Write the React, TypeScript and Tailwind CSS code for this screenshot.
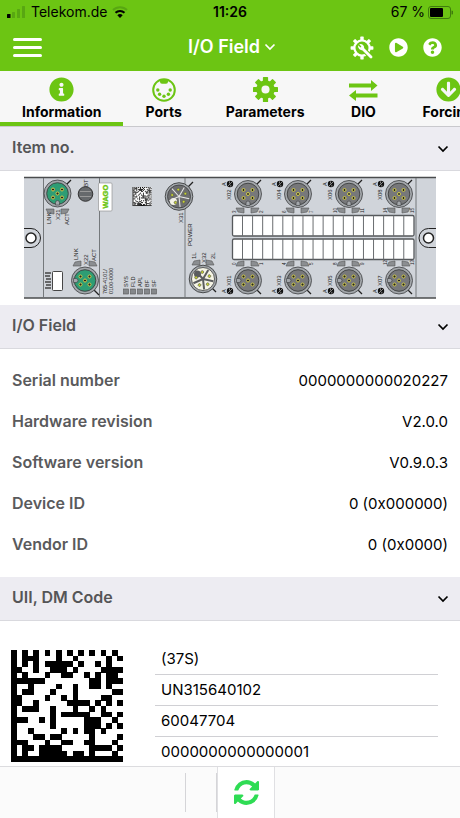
import React from "react";
import { FaArrowCircleDown, FaInfoCircle, FaPlayCircle, FaQuestionCircle } from "react-icons/fa";

const GREEN = "#6cc513";

function Teeth({ count, r, w, h }: { count: number; r: number; w: number; h: number }) {
  return (
    <>
      {Array.from({ length: count }, (_, i) => (
        <rect
          key={i}
          x={12 - w / 2}
          y={12 - r}
          width={w}
          height={h}
          rx="0.6"
          fill="currentColor"
          transform={`rotate(${(360 / count) * i} 12 12)`}
        />
      ))}
    </>
  );
}

function GearIcon() {
  return (
    <svg viewBox="0 0 24 24" className="size-[25px]" aria-hidden="true">
      <Teeth count={8} r={12} w={5} h={6} />
      <circle cx="12" cy="12" r="6.4" fill="none" stroke="currentColor" strokeWidth="5" />
    </svg>
  );
}

function ServiceIcon() {
  return (
    <svg viewBox="0 0 24 24" className="size-6" aria-hidden="true">
      <Teeth count={8} r={11.4} w={3.4} h={4} />
      <circle cx="12" cy="12" r="7.6" fill="none" stroke="currentColor" strokeWidth="2.2" />
      <path d="M14.5 14.5 22 22" stroke={GREEN} strokeWidth="5" />
      <path d="M12.5 12.5 21 21" stroke="currentColor" strokeWidth="2.8" strokeLinecap="round" />
      <path
        d="M9.2 8.200 11.400 10.400 10.400 11.400 8.200 9.200A3.800 3.800 0 0 0 13 14L14 13A3.800 3.800 0 0 0 9.200 8.200Z"
        fill="currentColor"
      />
    </svg>
  );
}

function RefreshIcon() {
  return (
    <svg viewBox="0 0 1536 1536" className="size-[25px]" fill="currentColor" aria-hidden="true">
      <path d="M1511 928q0 5-1 7-64 268-268 434.500T764 1536q-146 0-282.500-55T238 1324l-129 129q-19 19-45 19t-45-19-19-45V960q0-26 19-45t45-19h448q26 0 45 19t19 45-19 45l-137 137q71 66 161 102t187 36q134 0 250-65t186-179q11-17 53-117 8-23 30-23h192q13 0 22.500 9.500t9.500 22.500zm25-800v448q0 26-19 45t-45 19h-448q-26 0-45-19t-19-45 19-45l138-138Q969 256 768 256q-134 0-250 65T332 500q-11 17-53 117-8 23-30 23H50q-13 0-22.500-9.500T18 608v-7q65-268 270-434.500T768 0q146 0 284 55.500T1297 212l130-129q19-19 45-19t45 19 19 45z" />
    </svg>
  );
}

function PortsIcon() {
  return (
    <svg viewBox="0 0 24 24" className="size-6" aria-hidden="true">
      <circle cx="12" cy="12" r="10.800" fill="none" stroke="currentColor" strokeWidth="2" />
      <path d="M8 1.500h8v2.200a2 2 0 0 1-2 2h-4a2 2 0 0 1-2-2z" fill="currentColor" />
      {[
        [5.8, 12],
        [7.6, 16.2],
        [12, 18.2],
        [16.4, 16.2],
        [18.2, 12],
      ].map(([x, y]) => (
        <circle key={x} cx={x} cy={y} r="1.700" fill="currentColor" />
      ))}
    </svg>
  );
}

function DioIcon() {
  return (
    <svg viewBox="0 0 30 24" className="h-6 w-[30px]" fill="currentColor" aria-hidden="true">
      <path d="M1 5.500h22V2l6.500 5.500L23 13V9.500H1z" />
      <path d="M29.500 15.500H8V12L1 17.500 8 23v-3.500h21.500z" />
    </svg>
  );
}

function Chevron({ className }: { className: string }) {
  return (
    <svg
      viewBox="0 0 12 8"
      className={className}
      fill="none"
      stroke="currentColor"
      strokeWidth="1.700"
      aria-hidden="true"
    >
      <path d="M1.500 1.500 6 6l4.500-4.500" />
    </svg>
  );
}

function StatusBar() {
  return (
    <div className="relative flex h-6 items-center justify-between px-[7px] text-sm text-black">
      <div className="flex items-center gap-[5px]">
        <svg viewBox="0 0 19 12" className="h-3 w-[19px]" aria-hidden="true">
          <rect x="0" y="8" width="3.500" height="4" rx="0.500" fill="#000" />
          <rect x="5" y="6" width="3" height="6" rx="0.500" fill="#58a712" />
          <rect x="10" y="3" width="3" height="9" rx="0.500" fill="#58a712" />
          <rect x="15" y="0" width="3" height="12" rx="0.500" fill="#58a712" />
        </svg>
        <span>Telekom.de</span>
        <svg viewBox="0 0 16 12" className="h-3 w-4" fill="none" aria-hidden="true">
          <path d="M1 4a10 10 0 0 1 14 0" stroke="#58a712" strokeWidth="2" />
          <path d="M3.500 6.800a6.500 6.500 0 0 1 9 0" stroke="#000" strokeWidth="2" />
          <path d="M8 12 5.300 9.200a4 4 0 0 1 5.400 0z" fill="#000" />
        </svg>
      </div>
      <span className="absolute left-1/2 -translate-x-1/2 font-semibold">11:26</span>
      <div className="flex items-center gap-[3px]">
        <span>67 %</span>
        <svg viewBox="0 0 25 13" className="h-[13px] w-[25px]" aria-hidden="true">
          <rect x="0.500" y="0.500" width="22" height="12" rx="2.500" fill="none" stroke="#3f7c0d" />
          <rect x="2" y="2" width="13" height="9" rx="1" fill="#000" />
          <path d="M23.500 4.500v4a2 2 0 0 0 0-4z" fill="#3f7c0d" />
        </svg>
      </div>
    </div>
  );
}

function NavBar() {
  return (
    <header className="relative flex h-[47px] items-center justify-between pr-[18px] pl-[13px] text-white">
      <button type="button" aria-label="Menu" className="flex w-[29px] flex-col gap-[5px]">
        <span className="h-[3px] w-full rounded-sm bg-white" />
        <span className="h-[3px] w-full rounded-sm bg-white" />
        <span className="h-[3px] w-full rounded-sm bg-white" />
      </button>
      <button
        type="button"
        className="absolute left-1/2 flex -translate-x-1/2 items-center gap-1 pb-[2px] pl-1 text-lg font-semibold whitespace-nowrap"
      >
        I/O Field
        <Chevron className="h-2 w-3" />
      </button>
      <div className="flex items-center gap-[15px]">
        <button type="button" aria-label="Service">
          <ServiceIcon />
        </button>
        <button type="button" aria-label="Start">
          <FaPlayCircle className="size-[19px]" />
        </button>
        <button type="button" aria-label="Help">
          <FaQuestionCircle className="size-[19px]" />
        </button>
      </div>
    </header>
  );
}

const TABS = [
  { label: "Information", icon: <FaInfoCircle className="size-[25px]" />, active: true },
  { label: "Ports", icon: <PortsIcon />, active: false },
  { label: "Parameters", icon: <GearIcon />, active: false },
  { label: "DIO", icon: <DioIcon />, active: false },
  { label: "Forcing", icon: <FaArrowCircleDown className="size-[25px]" />, active: false },
];

function Tabs() {
  return (
    <nav className="flex h-14 shrink-0 overflow-x-auto overflow-y-hidden border-b border-[#c9c9cd] bg-[#f7f7f7] [scrollbar-width:none]">
      {TABS.map((t) => (
        <button
          key={t.label}
          type="button"
          className={`flex shrink-0 flex-col items-center border-b-4 px-[22px] pt-[6px] text-sm font-bold text-black ${
            t.active ? "border-[#6cc513]" : "border-transparent"
          }`}
        >
          <span className="flex h-7 items-center text-[#6cc513]">{t.icon}</span>
          <span className="leading-5">{t.label}</span>
        </button>
      ))}
    </nav>
  );
}

function SectionHeader({ title }: { title: string }) {
  return (
    <button
      type="button"
      className="flex h-11 w-full items-center justify-between border-b border-[#d9d9de] bg-[#edecf2] pr-[11px] pl-3 text-left text-base font-semibold text-[#555557]"
    >
      <span className="pb-[3px]">{title}</span>
      <Chevron className="h-2 w-3 text-black" />
    </button>
  );
}

function Label({ x, y, size = 6, children }: { x: number; y: number; size?: number; children: string }) {
  return (
    <text
      x={x}
      y={y}
      fontSize={size}
      fill="#222"
      transform={`rotate(-90 ${x} ${y})`}
      fontFamily="'Liberation Sans', Arial, sans-serif"
    >
      {children}
    </text>
  );
}

const PINS = [
  [-4.5, -4],
  [4.5, -4],
  [0, 0],
  [-4.5, 4],
  [4.5, 4],
];

function Connector({ x, y, fill, notch }: { x: number; y: number; fill: string; notch: "left" | "down" }) {
  return (
    <g transform={`translate(${x} ${y})`}>
      <circle r="13.500" fill="#a3a7ab" stroke="#3c3e40" strokeWidth="0.800" />
      <circle r="10.800" fill={fill} stroke="#3c3e40" strokeWidth="0.900" />
      {notch === "down" ? (
        <path d="M-2 11.500V9a2 2 0 0 1 4 0v2.500z" fill="#a3a7ab" stroke="#3c3e40" strokeWidth="0.600" />
      ) : (
        <path d="M-11.500-2H-9a2 2 0 0 1 0 4h-2.500z" fill="#a3a7ab" stroke="#3c3e40" strokeWidth="0.600" />
      )}
      {PINS.map(([px, py]) => (
        <circle key={`${px},${py}`} cx={px} cy={py} r="1.500" fill="#222" stroke="#d3cd4a" strokeWidth="1" />
      ))}
    </g>
  );
}

function PowerConnector({ x, y, light }: { x: number; y: number; light: boolean }) {
  const base = light ? "#f6f5e6" : "#6d6e70";
  const line = light ? "#5b5d5f" : "#e9e9e9";
  return (
    <g transform={`translate(${x} ${y})`}>
      <circle r="13.800" fill="#a3a7ab" stroke="#3c3e40" strokeWidth="0.900" />
      <circle r="11.500" fill={base} stroke="#3c3e40" strokeWidth="0.800" />
      <circle cx="-5.500" cy={light ? -5 : 5} r="3.500" fill={light ? "#5b5d5f" : "#f6f5e6"} />
      {[30, 102, 174, 246, 318].map((a) => (
        <path key={a} d="M0 0V-10.500" stroke={line} strokeWidth={light ? 2 : 1} transform={`rotate(${a})`} />
      ))}
      {[-6, 66, 138, 210, 282].map((a) => (
        <circle key={a} cy="-7" r="1.400" fill="#c9d62e" stroke="#555" strokeWidth="0.600" transform={`rotate(${a})`} />
      ))}
    </g>
  );
}

function Led({ x, y, flip, up }: { x: number; y: number; flip?: boolean; up?: boolean }) {
  return (
    <path
      d="M0 0 8 0V5L2 4z"
      fill="#8b8e91"
      stroke="#555"
      strokeWidth="0.600"
      transform={`translate(${x} ${y}) scale(${flip ? -1 : 1} ${up ? -1 : 1})`}
    />
  );
}

function PolarityMark({ x, y }: { x: number; y: number }) {
  return (
    <g transform={`translate(${x} ${y})`}>
      <circle r="3.200" fill="#111" />
      <path d="M-2.200 2.200 2.200-2.200M-0.500-2.600v2M0.800 0.800v1.800" stroke="#fff" strokeWidth="0.500" />
    </g>
  );
}

const MATRIX = [
  "10101010101010101010",
  "10111000100100000101",
  "10101011111010010100",
  "11001001110100001111",
  "10100010011001010110",
  "11111100000000110111",
  "10010000100100110100",
  "10110001000100000011",
  "11000010010100001100",
  "11001000001111010101",
  "10111001000100101000",
  "10000001011111001101",
  "11100101000001110010",
  "10000001000001110101",
  "10010000010101101000",
  "10001101100000100001",
  "11100010011001100010",
  "10110111100000111101",
  "10100111110110100010",
  "11111111111111111111",
];

function MatrixCells() {
  return (
    <>
      {MATRIX.flatMap((row, r) =>
        [...row].map((v, c) =>
          v === "1" ? <rect key={`${r}-${c}`} x={c} y={r} width="1.020" height="1.020" fill="#000" /> : null,
        ),
      )}
    </>
  );
}

const PORT_COLUMNS = [
  { x: 248, top: "X02", bottom: "X01", topLeds: ["3", "2"], bottomLeds: ["0", "1"] },
  { x: 298, top: "X04", bottom: "X03", topLeds: ["6", "7"], bottomLeds: ["4", "5"] },
  { x: 349, top: "X06", bottom: "X05", topLeds: ["10", "11"], bottomLeds: ["8", "9"] },
  { x: 399, top: "X08", bottom: "X07", topLeds: ["14", "15"], bottomLeds: ["12", "13"] },
];

function DeviceDrawing() {
  return (
    <svg viewBox="24 176 412 123" className="w-full" role="img" aria-label="I/O module front view">
      <rect x="24" y="177" width="412" height="121" fill="#d0d4da" />
      <path d="M24 177.500H436M24 298H436" stroke="#4a4c4e" strokeWidth="1.300" />
      <path d="M43.500 178V297M99.500 178V297M185 178V297M416 178V297" stroke="#6a6d70" strokeWidth="0.900" />

      <path d="M24 228.500H31a9.500 9.500 0 0 1 0 19H24" fill="#d0d4da" stroke="#222" />
      <circle cx="31" cy="238" r="5" fill="#fff" stroke="#222" strokeWidth="1.500" />
      <path d="M436 228.500H428.500a9.500 9.500 0 0 0 0 19H436" fill="#d0d4da" stroke="#222" />
      <circle cx="428.500" cy="238" r="5" fill="#fff" stroke="#222" strokeWidth="1.500" />

      <path d="M66 185 71 180M94 290 99 295M188 187 193 182M211 287 216 292" stroke="#222" strokeWidth="1.300" />
      <Connector x={57.5} y={193.5} fill="#2e9d74" notch="down" />
      <Led x={46} y={209} />
      <Led x={69} y={209} flip />
      <Label x={50.5} y={224}>LNK</Label>
      <Label x={60} y={220}>X21</Label>
      <Label x={69} y={225}>ACT</Label>

      <Label x={87.5} y={187}>BT</Label>
      <circle cx="85.500" cy="194" r="7.300" fill="#66696c" stroke="#333" />
      <path d="M80 191.500h11M80 196.500h11" stroke="#999" />

      <rect x="98.500" y="183" width="13.500" height="28" rx="1" fill="#fff" stroke="#888" strokeWidth="0.600" />
      <text
        x="108"
        y="208.500"
        fontSize="7.500"
        fontWeight="900"
        fill="#6cc513"
        stroke="#6cc513"
        strokeWidth="0.400"
        transform="rotate(-90 108 208.500)"
        fontFamily="'Liberation Sans', Arial, sans-serif"
      >
        WAGO
      </text>

      <Connector x={85} y={280.5} fill="#2e9d74" notch="left" />
      <Led x={73} y={266} up />
      <Led x={97} y={266} flip up />
      <Label x={78} y={260}>LNK</Label>
      <Label x={87.5} y={265}>X22</Label>
      <Label x={96} y={261}>ACT</Label>
      <rect x="52.500" y="271.500" width="10" height="19" rx="1" fill="#fff" stroke="#333" strokeWidth="0.900" />
      <path d="M45 273h6M45 276h5M46 279h5M45 282h6M46 285h5M45 288h6" stroke="#444" strokeWidth="1.500" />
      <Label x={107} y={294} size={5.5}>765-4101/</Label>
      <Label x={113} y={294} size={5.5}>0100-0000</Label>

      <g transform="translate(132.500 187) scale(0.950)">
        <rect width="20" height="20" fill="#fff" />
        <MatrixCells />
      </g>

      {["SYS", "FLD", "APL", "BF", "SF"].map((name, i) => (
        <g key={name}>
          <rect x={123.5 + i * 7} y="289" width="5" height="5" fill="#85888b" stroke="#555" strokeWidth="0.600" />
          <Label x={128 + i * 7} y={287} size={5.5}>
            {name}
          </Label>
        </g>
      ))}

      <PowerConnector x={179} y={196.5} light={false} />
      <Label x={183} y={223}>X31</Label>
      <Label x={192} y={246}>POWER</Label>
      <Led x={192} y={265} up />
      <Led x={214} y={265} flip up />
      <Label x={196} y={259}>1L</Label>
      <Label x={205.5} y={263}>X32</Label>
      <Label x={215} y={259}>2L</Label>
      <PowerConnector x={203} y={279} light />

      {[215.5, 239].map((y) => (
        <g key={y}>
          <rect x="232.500" y={y} width="181.500" height="20.500" rx="1.500" fill="#fff" stroke="#55585b" strokeWidth="1.300" />
          {Array.from({ length: 17 }, (_, i) => (
            <path key={i} d={`M${242.5 + i * 10.08} ${y}v20.500`} stroke="#6a6d70" />
          ))}
        </g>
      ))}

      {PORT_COLUMNS.map((p) => (
        <g key={p.x}>
          <path d={`M${p.x + 8} 185l5-5M${p.x + 8} 289l5 5`} stroke="#222" strokeWidth="1.300" />
          <Connector x={p.x} y={194} fill="#77787a" notch="down" />
          <Connector x={p.x} y={280.5} fill="#77787a" notch="left" />
          <PolarityMark x={p.x - 18} y={184} />
          <PolarityMark x={p.x - 18} y={291} />
          <Label x={p.x - 22.5} y={186} size={5.5}>A</Label>
          <Label x={p.x - 22.5} y={293} size={5.5}>A</Label>
          <Label x={p.x - 17} y={200}>{p.top}</Label>
          <Label x={p.x - 17} y={286}>{p.bottom}</Label>
          <Led x={p.x - 12} y={208} />
          <Led x={p.x + 11} y={208} flip />
          <Led x={p.x - 12} y={266} up />
          <Led x={p.x + 11} y={266} flip up />
          <Label x={p.x - 12} y={213} size={4.5}>{p.topLeds[0]}</Label>
          <Label x={p.x + 15} y={213} size={4.5}>{p.topLeds[1]}</Label>
          <Label x={p.x - 12} y={265} size={4.5}>{p.bottomLeds[0]}</Label>
          <Label x={p.x + 15} y={265} size={4.5}>{p.bottomLeds[1]}</Label>
        </g>
      ))}
    </svg>
  );
}

const FIELDS = [
  ["Serial number", "0000000000020227"],
  ["Hardware revision", "V2.0.0"],
  ["Software version", "V0.9.0.3"],
  ["Device ID", "0 (0x000000)"],
  ["Vendor ID", "0 (0x0000)"],
];

const UII = ["(37S)", "UN315640102", "60047704", "0000000000000001"];

export default function App() {
  return (
    <div className="flex h-screen flex-col overflow-hidden bg-white font-['Inter','Liberation_Sans',sans-serif] text-black">
      <div className="shrink-0 bg-[#6cc513]">
        <StatusBar />
        <NavBar />
      </div>
      <Tabs />
      <main className="min-h-0 flex-1 overflow-y-auto [scrollbar-width:none]">
        <SectionHeader title="Item no." />
        <div className="px-6 pt-[5px] pb-[6px]">
          <DeviceDrawing />
        </div>
        <SectionHeader title="I/O Field" />
        <dl className="px-3 pt-[11px] pb-3">
          {FIELDS.map(([name, value]) => (
            <div key={name} className="flex h-[41px] items-baseline justify-between leading-[41px]">
              <dt className="font-semibold text-[#5a5a5c]">{name}</dt>
              <dd className="text-[15px] leading-[41px]">{value}</dd>
            </div>
          ))}
        </dl>
        <SectionHeader title="UII, DM Code" />
        <div className="flex gap-8 pt-[23px] pr-[22px] pb-6 pl-[11px]">
          <svg
            viewBox="0 0 20 20"
            className="mt-[6px] size-28 shrink-0"
            shapeRendering="crispEdges"
            role="img"
            aria-label="Data matrix code"
          >
            <MatrixCells />
          </svg>
          <ul className="flex-1 divide-y divide-[#d0d0d4] text-[15px]">
            {UII.map((line) => (
              <li key={line} className="flex h-[31px] items-center px-[6px]">
                {line}
              </li>
            ))}
          </ul>
        </div>
      </main>
      <footer className="flex h-[52px] shrink-0 items-stretch border-t border-[#dcdcdf] bg-[#fbfbfb] pl-[185px]">
        <div className="my-[6px] w-8 border-x border-[#d5d5d8]" />
        <button
          type="button"
          aria-label="Refresh"
          className="flex w-[58px] items-center justify-center border-x border-[#e0e0e3] bg-white text-[#2fdc54]"
        >
          <RefreshIcon />
        </button>
      </footer>
    </div>
  );
}
